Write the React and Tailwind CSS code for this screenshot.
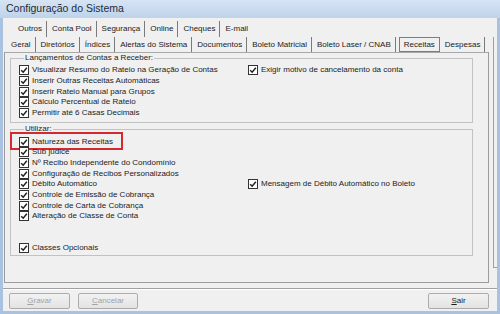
import React from 'react';

const FONT = "font-['Liberation_Sans','Arial',sans-serif]";

const TabsRow1 = ['Outros', 'Conta Pool', 'Segurança', 'Online', 'Cheques', 'E-mail'];
const TabsRow2 = ['Geral', 'Diretórios', 'Índices', 'Alertas do Sistema', 'Documentos', 'Boleto Matricial', 'Boleto Laser / CNAB'];

const lancamentos = [
    ['Visualizar Resumo do Rateio na Geração de Contas', 'Exigir motivo de cancelamento da conta'],
    ['Inserir Outras Receitas Automáticas', null],
    ['Inserir Rateio Manual para Grupos', null],
    ['Cálculo Percentual de Rateio', null],
    ['Permitir até 6 Casas Decimais', null],
];

const utilizar = [
    ['Natureza das Receitas', null],
    ['Sub judice', null],
    ['Nº Recibo Independente do Condomínio', null],
    ['Configuração de Recibos Personalizados', null],
    ['Débito Automático', 'Mensagem de Débito Automático no Boleto'],
    ['Controle de Emissão de Cobrança', null],
    ['Controle de Carta de Cobrança', null],
    ['Alteração de Classe de Conta', null],
    [null, null],
    [null, null],
    ['Classes Opcionais', null],
];

const App = () => {
    return (
        <div className={`w-[500px] h-[314px] bg-[#a9c2e1] flex flex-col text-[#1b1b1b] ${FONT}`}>
            {/* Title bar */}
            <div className="h-[18px] shrink-0 flex items-center pl-[6px] bg-gradient-to-b from-[#d6e4f4] to-[#bed3ea] text-[10.5px] text-[#1e2a38]">
                Configuração do Sistema
            </div>

            {/* Client area */}
            <div className="flex-1 min-h-0 mx-[3px] mb-[3px] bg-[#f0f0f0] flex flex-col text-[8px] leading-[10px]">
                <div className="flex flex-1 min-h-0">
                    <div className="w-[486px] flex flex-col">
                        {/* Tab rows */}
                        <div className="flex h-[16px] mt-[3px] pl-[10px] items-stretch">
                            {TabsRow1.map((t, i) => (
                                <Tab key={t} label={t} last={i === TabsRow1.length - 1} />
                            ))}
                        </div>
                        <div className="flex h-[15px] pl-[3px] items-stretch">
                            {TabsRow2.map((t) => (
                                <Tab key={t} label={t} />
                            ))}
                            <div className="ml-[3px] px-[4px] border border-[#7d7d7d] flex items-center">Receitas</div>
                            <Tab label="Despesas" />
                        </div>

                        {/* Tab panel */}
                        <div className="flex-1 ml-[1px] border border-[#9c9c9c] border-t-[#a8a8a8] px-[5px]">
                            <GroupBox title="Lançamentos de Contas a Receber:" rows={lancamentos} className="pt-[2px] pb-[4px]" />
                            <GroupBox title="Utilizar:" rows={utilizar} className="mt-[1px] pt-[2px] pb-[1px]" highlight={0} />
                        </div>
                    </div>
                    <div className="flex-1 mt-[19px] ml-[4px] h-[231px] border-l border-b border-[#a0a0a0]"></div>
                </div>

                {/* Separator */}
                <div className="mt-[5px] border-t border-[#a0a0a0] border-b border-b-white"></div>

                {/* Buttons */}
                <div className="flex items-center mt-[3px] mb-[2px] pl-[6px] pr-[8px]">
                    <Button label="ravar" hot="G" disabled className="w-[61px]" />
                    <Button label="ancelar" hot="C" disabled className="w-[60px] ml-[8px]" />
                    <Button label="air" hot="S" className="w-[61px] ml-auto" />
                </div>
            </div>
        </div>
    );
};

const Tab = ({ label, last }) => (
    <div className={`pl-[5px] pr-[4px] flex items-center ${last ? '' : 'border-r border-[#7a7a7a]'}`}>
        {label}
    </div>
);

const GroupBox = ({ title, rows, className, highlight }) => (
    <fieldset className={`w-[463px] border border-[#c2c2c2] pl-[8px] ${className}`}>
        <legend className="ml-[5px] px-[1px] leading-[10px]">{title}</legend>
        <div className="grid grid-cols-[229px_1fr]">
            {rows.map(([left, right], i) => (
                <React.Fragment key={i}>
                    <div className="h-[10.67px] flex items-center relative">
                        {left && <CheckItem label={left} />}
                        {highlight === i && (
                            <div className="absolute left-[-9px] top-[-4px] w-[113px] h-[18px] border-2 border-[#d32a32]"></div>
                        )}
                    </div>
                    <div className="h-[10.67px] flex items-center">
                        {right && <CheckItem label={right} />}
                    </div>
                </React.Fragment>
            ))}
        </div>
    </fieldset>
);

const CheckItem = ({ label }) => (
    <div className="flex items-center whitespace-nowrap">
        <span className="w-[10px] h-[10px] border border-[#333] bg-white flex items-center justify-center shrink-0">
            <svg width="8" height="8" viewBox="0 0 8 8">
                <path d="M1.2 4.2 L3.2 6.2 L6.8 1.8" fill="none" stroke="#222" strokeWidth="1.5" />
            </svg>
        </span>
        <span className="ml-[3px]">{label}</span>
    </div>
);

const Button = ({ label, hot, disabled, className }) => (
    <div className={`h-[16px] flex items-center justify-center border border-[#acacac] rounded-[2px] bg-gradient-to-b from-[#f2f2f2] to-[#e3e3e3] ${disabled ? 'text-[#a3a3a3]' : 'text-[#1b1b1b]'} ${className}`}>
        <span>
            <span className="underline">{hot}</span>
            {label}
        </span>
    </div>
);

export default App;
